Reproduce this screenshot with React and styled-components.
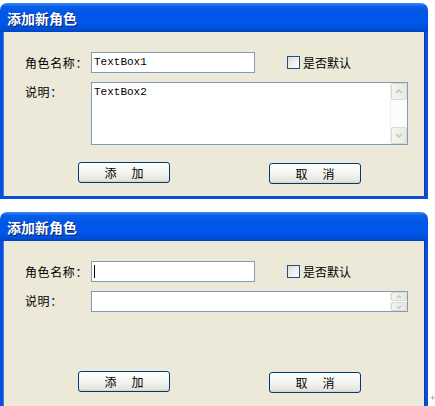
import React from 'react';
import styled, { createGlobalStyle } from 'styled-components';

const GlobalStyle = createGlobalStyle`
  body {
    margin: 0;
    background: #fff;
    font-family: "Noto Sans CJK SC", "Liberation Sans", sans-serif;
  }
`;

const Page = styled.div`
  width: 435px;
  height: 406px;
  overflow: hidden;
  display: flex;
  flex-direction: column;
  position: relative;
`;

const Window = styled.div`
  width: 428px;
  margin-top: ${(p) => p.$top}px;
  display: flex;
  flex-direction: column;
  flex-shrink: 0;
`;

const TitleBar = styled.div`
  height: 29px;
  border-radius: 7px 7px 0 0;
  background: linear-gradient(
    to bottom,
    #3b8cf6 0%,
    #0a5fe8 12%,
    #0055e5 35%,
    #0058ee 65%,
    #0050da 88%,
    #0042c2 100%
  );
  display: flex;
  align-items: center;
  padding-left: 7px;
  color: #fff;
  font-size: 14px;
  font-weight: bold;
  text-shadow: 1px 1px 0 #0a1e6a;
`;

const Body = styled.div`
  background: #ece9d8;
  border: 3px solid #0b4fd8;
  border-top: none;
  border-bottom-width: ${(p) => (p.$open ? 0 : 3)}px;
  box-shadow: inset 1px 0 0 #3c7bf0, inset -1px 0 0 #0a3cc0;
  padding: 20px 0 ${(p) => p.$pb}px 22px;
  display: flex;
  flex-direction: column;
  height: ${(p) => p.$h}px;
  box-sizing: content-box;
`;

const Row = styled.div`
  display: flex;
  align-items: ${(p) => (p.$top ? 'flex-start' : 'center')};
  margin-top: ${(p) => p.$mt || 0}px;
`;

const Label = styled.div`
  width: 66px;
  font-size: 12px;
  letter-spacing: 0.6px;
  color: #000;
  line-height: ${(p) => (p.$top ? '20px' : '21px')};
`;

const TextBox = styled.div`
  width: ${(p) => p.$w}px;
  height: ${(p) => p.$h}px;
  box-sizing: border-box;
  border: 1px solid #7f9db9;
  background: #fff;
  font-family: "Liberation Mono", monospace;
  font-size: 11px;
  color: #000;
  padding: 2px 0 0 2px;
  line-height: 14px;
  position: relative;
  display: flex;
`;

const Caret = styled.span`
  display: inline-block;
  width: 1px;
  height: 13px;
  background: #000;
  margin-top: 1px;
`;

const TextArea = styled(TextBox)`
  padding: 0;
  justify-content: space-between;
`;

const AreaText = styled.div`
  padding: 2px 0 0 2px;
`;

const ScrollBar = styled.div`
  width: 16px;
  background: #fcfcfa;
  display: flex;
  flex-direction: column;
  justify-content: space-between;
  border-left: 1px solid #f0efe9;
`;

const ScrollBtn = styled.div`
  height: ${(p) => p.$h}px;
  border: 1px solid #dad9d2;
  border-radius: 2px;
  background: linear-gradient(to right, #f5f4ef, #e9e8e1);
  box-sizing: border-box;
  display: flex;
  align-items: center;
  justify-content: center;
`;

const CheckWrap = styled.label`
  display: flex;
  align-items: center;
  gap: 3px;
  margin-left: 32px;
  font-size: 12px;
  color: #000;
`;

const CheckBox = styled.span`
  width: 13px;
  height: 13px;
  box-sizing: border-box;
  border: 1px solid #1c5180;
  background: linear-gradient(135deg, #dcdcd7 0%, #f2f2ef 60%, #ffffff 100%);
`;

const ButtonRow = styled.div`
  display: flex;
  gap: 99px;
  padding-left: 53px;
  margin-top: ${(p) => p.$mt}px;
`;

const Button = styled.div`
  width: 92px;
  height: 21px;
  box-sizing: border-box;
  border: 1px solid #003c74;
  border-radius: 3px;
  background: linear-gradient(to bottom, #ffffff 0%, #f4f4f0 50%, #e6e5df 90%, #d6d0c5 100%);
  display: flex;
  align-items: center;
  justify-content: center;
  gap: 15px;
  font-size: 12px;
  color: #000;
  margin-top: ${(p) => p.$shift || 0}px;
`;

const Chevron = ({ up, small }) => (
  <svg width={small ? 6 : 8} height={small ? 4 : 5} viewBox="0 0 8 5">
    <path
      d={up ? 'M1 4 L4 1 L7 4' : 'M1 1 L4 4 L7 1'}
      fill="none"
      stroke="#c3c3bb"
      strokeWidth="1.5"
    />
  </svg>
);

const RoleDialog = ({ top, bodyHeight, pb, areaHeight, buttonGap, filled, open }) => (
  <Window $top={top}>
    <TitleBar>添加新角色</TitleBar>
    <Body $h={bodyHeight} $pb={pb} $open={open}>
      <Row>
        <Label>角色名称：</Label>
        <TextBox $w={164} $h={21}>{filled ? 'TextBox1' : <Caret />}</TextBox>
        <CheckWrap>
          <CheckBox />
          是否默认
        </CheckWrap>
      </Row>
      <Row $top $mt={9}>
        <Label $top>说明：</Label>
        <TextArea $w={317} $h={areaHeight}>
          <AreaText>{filled ? 'TextBox2' : ''}</AreaText>
          <ScrollBar>
            <ScrollBtn $h={filled ? 17 : 9}>
              <Chevron up small={!filled} />
            </ScrollBtn>
            <ScrollBtn $h={filled ? 17 : 9}>
              <Chevron small={!filled} />
            </ScrollBtn>
          </ScrollBar>
        </TextArea>
      </Row>
      <ButtonRow $mt={buttonGap}>
        <Button>
          <span>添</span>
          <span>加</span>
        </Button>
        <Button $shift={1}>
          <span>取</span>
          <span>消</span>
        </Button>
      </ButtonRow>
    </Body>
  </Window>
);

const Grip = styled.span`
  position: absolute;
  left: 430px;
  top: 393px;
  font-size: 9px;
  color: #8a8a8a;
  font-family: "Liberation Sans", sans-serif;
`;

const App = () => (
  <Page>
    <GlobalStyle />
    <RoleDialog top={3} bodyHeight={131} pb={13} areaHeight={63} buttonGap={17} filled />
    <RoleDialog top={13} bodyHeight={150} pb={0} areaHeight={21} buttonGap={59} open />
    <Grip>+</Grip>
  </Page>
);

export default App;
